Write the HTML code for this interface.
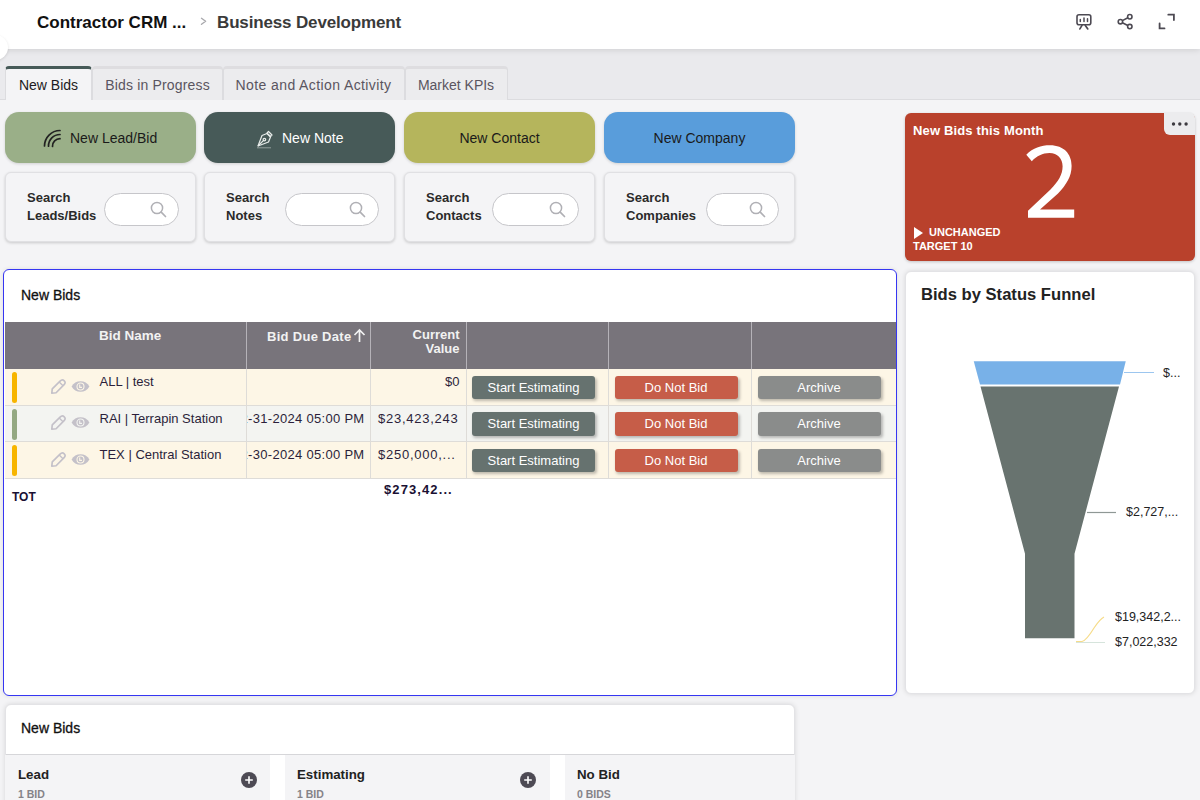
<!DOCTYPE html>
<html><head><meta charset="utf-8">
<style>
*{box-sizing:border-box;margin:0;padding:0}
html,body{width:1200px;height:800px;overflow:hidden}
body{background:#f4f4f6;font-family:"Liberation Sans",sans-serif;position:relative;color:#222}
.abs{position:absolute}
#hdr{left:0;top:0;width:1200px;height:49px;background:#fff;box-shadow:0 1px 6px rgba(0,0,0,.12)}
#bandbg{left:0;top:49px;width:1200px;height:51px;background:#eaeaed;border-bottom:1px solid #dcdcdf}
.ttl{font-weight:bold;font-size:17px;top:12.7px;white-space:nowrap}
.tab{top:65.5px;height:34px;background:#ececee;border:1px solid #dcdcdf;border-bottom:none;border-radius:4px 4px 0 0;font-size:14px;color:#5a5560;text-align:center;line-height:32px;border-top:3px solid #dedde0}
.tab.act{background:#f4f4f6;height:34.5px;color:#1d1b22;border-top:3px solid #465a58}
.btn{top:112px;height:51px;width:191px;border-radius:14px;font-size:14px;text-align:center;line-height:53px;box-shadow:0 1px 3px rgba(0,0,0,.15)}
.srch{top:171.5px;height:70.3px;width:190.5px;border-radius:6px;background:#f4f4f6;border:1px solid #e0e0e3;box-shadow:0 1px 3px rgba(0,0,0,.18);font-size:13px;font-weight:bold;color:#2a2a2a}
.srch .lbl{position:absolute;left:21px;top:16px;line-height:18.5px}
.mag{position:absolute;top:28.8px;left:144.3px}
.pill{position:absolute;top:20.5px;height:33px;border-radius:17px;background:#fff;border:1.2px solid #c6c6ca}

.th{position:absolute;top:321.5px;height:47.5px;background:#78747b;border-right:1px solid #b5b2b8;color:#f2f2f2;font-weight:bold;font-size:13px}
.row{position:absolute;left:5px;width:891px;height:36.7px;border-bottom:1px solid #dedcd8}
.td{position:absolute;top:0;height:100%;border-right:1px solid #dedcd8;overflow:hidden;font-size:13px;color:#2b1f3a;white-space:nowrap}
.td span{position:absolute;right:6px;top:5px}
.tb{position:absolute;top:6.5px;height:23.5px;width:123px;border-radius:3px;color:#fff;font-size:13px;text-align:center;line-height:23.5px;box-shadow:1.5px 2px 3px rgba(0,0,0,.25)}
.bar{position:absolute;left:7px;top:3px;width:5px;height:31px;border-radius:3px}
</style></head>
<body>
<div id="bandbg" class="abs"></div>
<div id="hdr" class="abs"></div>
<div class="abs" style="left:-17px;top:35px;width:25px;height:25px;border-radius:50%;background:#fff;box-shadow:0 1px 3px rgba(0,0,0,.12)"></div>
<div class="abs ttl" style="left:37px;color:#111">Contractor CRM ...</div>
<svg class="abs" style="left:199px;top:16px" width="10" height="10" viewBox="0 0 10 10"><path d="M2.5 2.3 L6.6 5.3 L2.5 8.3" fill="none" stroke="#a9a9ad" stroke-width="1.4" stroke-linecap="round" stroke-linejoin="round"/></svg>
<div class="abs ttl" style="left:217px;color:#3a3a3a;letter-spacing:-.15px">Business Development</div>


<svg class="abs" style="left:1074px;top:12px" width="20" height="19" viewBox="0 0 20 19"><rect x="3" y="2.8" width="13.8" height="9.9" rx="2" fill="none" stroke="#4d4a53" stroke-width="1.6"/><path d="M6.3 7.4v2.2M10 6v3.6M13.5 6.8v2.8" stroke="#4d4a53" stroke-width="1.5" stroke-linecap="round"/><path d="M8 13.4 L5.9 16.9 M11.3 13.4 L13.8 16.9" stroke="#4d4a53" stroke-width="1.7" stroke-linecap="round" fill="none"/></svg>
<svg class="abs" style="left:1116px;top:12px" width="20" height="19" viewBox="0 0 20 19"><circle cx="4.4" cy="9.7" r="2.2" fill="none" stroke="#4d4a53" stroke-width="1.6"/><circle cx="13.8" cy="4.75" r="2.2" fill="none" stroke="#4d4a53" stroke-width="1.6"/><circle cx="13.8" cy="14.55" r="2.2" fill="none" stroke="#4d4a53" stroke-width="1.6"/><path d="M6.4 8.6 L11.8 5.8 M6.4 10.8 L11.8 13.5" stroke="#4d4a53" stroke-width="1.6"/></svg>
<svg class="abs" style="left:1156px;top:12px" width="20" height="19" viewBox="0 0 20 19"><path d="M12.3 2.7 H17.9 V8 M3.6 11.5 V16.4 H8.5" fill="none" stroke="#4d4a53" stroke-width="1.8" stroke-linecap="round"/></svg>

<div class="abs tab act" style="left:5px;width:87px">New Bids</div>
<div class="abs tab" style="left:92px;width:131px;letter-spacing:.17px">Bids in Progress</div>
<div class="abs tab" style="left:222.5px;width:182px;letter-spacing:.4px">Note and Action Activity</div>
<div class="abs tab" style="left:404.5px;width:103px">Market KPIs</div>

<div class="abs btn" style="left:5px;width:190.5px;background:#9aaf88;color:#1a1a1a"><span style="position:absolute;left:65px;top:0">New Lead/Bid</span></div>
<svg class="abs" style="left:42px;top:128px" width="20" height="20" viewBox="0 0 20 20"><g fill="none" stroke="#222" stroke-width="1.7" stroke-linecap="round"><path d="M2.5 18 A15.5 15.5 0 0 1 18 2.5"/><path d="M6.5 18.2 A11.5 11.5 0 0 1 18 6.5"/><path d="M10.5 18.4 A7.5 7.5 0 0 1 18 10.7"/></g></svg>
<div class="abs btn" style="left:204px;width:191px;background:#475a58;color:#fff"><span style="position:absolute;left:78px;top:0">New Note</span></div>
<svg class="abs" style="left:256px;top:130px" width="18" height="19" viewBox="0 0 18 19"><g fill="none" stroke="#e8ecea" stroke-width="1.2" stroke-linejoin="round"><path d="M12.5 1.5 L16 5 L14.5 6.5 L11 3Z"/><path d="M11 3.5 L6 5.5 L2 16 L12.5 12 L14.5 7 Z"/><path d="M2 16 L7.3 10.7"/><circle cx="8.4" cy="9.6" r="1.3"/></g><path d="M1 17.8 H15" stroke="#cfd6d4" stroke-width="1" opacity=".55"/></svg>
<div class="abs btn" style="left:404px;width:191px;background:#b5b55c;color:#1a1a1a">New Contact</div>
<div class="abs btn" style="left:604px;width:191px;background:#599ddb;color:#1a1a1a">New Company</div>

<div class="abs srch" style="left:5px"><div class="lbl">Search<br>Leads/Bids</div><div class="pill" style="left:98.2px;width:74.5px"></div><svg class="mag" width="18" height="18" viewBox="0 0 18 18"><circle cx="7" cy="7" r="5.6" fill="none" stroke="#b0b0b5" stroke-width="1.5"/><path d="M11.2 11.2 L15.5 15.5" stroke="#b0b0b5" stroke-width="1.7" stroke-linecap="round"/></svg></div>
<div class="abs srch" style="left:204px"><div class="lbl">Search<br>Notes</div><div class="pill" style="left:79.5px;width:94px"></div><svg class="mag" width="18" height="18" viewBox="0 0 18 18"><circle cx="7" cy="7" r="5.6" fill="none" stroke="#b0b0b5" stroke-width="1.5"/><path d="M11.2 11.2 L15.5 15.5" stroke="#b0b0b5" stroke-width="1.7" stroke-linecap="round"/></svg></div>
<div class="abs srch" style="left:404px"><div class="lbl">Search<br>Contacts</div><div class="pill" style="left:86.5px;width:87px"></div><svg class="mag" width="18" height="18" viewBox="0 0 18 18"><circle cx="7" cy="7" r="5.6" fill="none" stroke="#b0b0b5" stroke-width="1.5"/><path d="M11.2 11.2 L15.5 15.5" stroke="#b0b0b5" stroke-width="1.7" stroke-linecap="round"/></svg></div>
<div class="abs srch" style="left:604px"><div class="lbl">Search<br>Companies</div><div class="pill" style="left:100.5px;width:73px"></div><svg class="mag" width="18" height="18" viewBox="0 0 18 18"><circle cx="7" cy="7" r="5.6" fill="none" stroke="#b0b0b5" stroke-width="1.5"/><path d="M11.2 11.2 L15.5 15.5" stroke="#b0b0b5" stroke-width="1.7" stroke-linecap="round"/></svg></div>

<!-- KPI card -->
<div class="abs" style="left:905px;top:113px;width:290px;height:148px;background:#b9412c;border-radius:6px;box-shadow:0 1px 3px rgba(0,0,0,.2)"></div>
<div class="abs" style="left:1164px;top:112px;width:31px;height:23px;background:#ececee;border-radius:0 6px 0 6px"></div>
<svg class="abs" style="left:1164px;top:112px" width="31" height="24" viewBox="0 0 31 24"><circle cx="9.5" cy="12" r="1.7" fill="#3c3a40"/><circle cx="15.8" cy="12" r="1.7" fill="#3c3a40"/><circle cx="22.1" cy="12" r="1.7" fill="#3c3a40"/></svg>
<div class="abs" style="left:913px;top:123px;font-size:13px;font-weight:bold;color:#fff;letter-spacing:.15px">New Bids this Month</div>
<svg class="abs" style="left:1010px;top:135px" width="80" height="90" viewBox="1010 135 80 90"><path d="M1026.3 154.8 C1033 147.8 1041 145.3 1050 145.3 C1064 145.3 1071.6 154 1071.6 166 C1071.6 176.5 1066.5 184.5 1058 193.5 L1040 209.6 L1074.2 209.6 L1074.2 217.7 L1028 217.7 L1028 210.8 L1050.5 189.5 C1058.5 181.5 1062.6 174.5 1062.6 166.3 C1062.6 158.5 1057.5 153 1049.5 153 C1042.5 153 1036.8 156 1031.8 161.2 Z" fill="#fff"/></svg>
<div class="abs" style="left:913.5px;top:226.8px;width:0;height:0;border-left:9.5px solid #fff;border-top:6.1px solid transparent;border-bottom:6.1px solid transparent"></div><div class="abs" style="left:929px;top:226px;font-size:11px;font-weight:bold;color:#fff">UNCHANGED</div>
<div class="abs" style="left:913px;top:240px;font-size:11px;font-weight:bold;color:#fff">TARGET 10</div>

<!-- table panel -->
<div class="abs" style="left:3px;top:269px;width:894px;height:427px;background:#fff;border:1.8px solid #3636f2;border-radius:6px;box-shadow:0 0 4px rgba(0,0,0,.1)"></div>
<div class="abs" style="left:21px;top:287px;font-size:14px;color:#111;-webkit-text-stroke:.3px #111">New Bids</div>


<!-- table header -->
<div class="th" style="left:5px;width:242px"><div class="abs" style="left:94px;top:6px;font-size:13.5px">Bid Name</div></div>
<div class="th" style="left:246.5px;width:124px"><div class="abs" style="right:4px;top:6px;letter-spacing:.3px">Bid Due Date<svg width="13" height="15" viewBox="0 0 13 15" style="vertical-align:-2px;margin-left:1px"><path d="M6.5 14V2M1.5 7L6.5 2L11.5 7" fill="none" stroke="#f2f2f2" stroke-width="1.7"/></svg></div></div>
<div class="th" style="left:370.5px;width:96px;text-align:right"><div class="abs" style="right:6px;top:6px;line-height:14.5px">Current<br>Value</div></div>
<div class="th" style="left:466.5px;width:142px"></div>
<div class="th" style="left:608.5px;width:143px"></div>
<div class="th" style="left:751.5px;width:144px;border-right:none"></div>
<div class="row" style="top:369px;background:#fdf6e6">
 <div class="bar" style="background:#f7b500"></div>
 <svg class="abs" style="left:44.5px;top:9.5px" width="16" height="16" viewBox="0 0 16 16"><g transform="translate(8 8) rotate(45)" fill="none" stroke="#c4c1c9" stroke-linejoin="round"><path d="M-2.7 -5.6 Q-2.7 -8.8 0 -8.8 Q2.7 -8.8 2.7 -5.6 V5.4 L0 8.8 L-2.7 5.4Z" stroke-width="1.7"/><path d="M-2.7 -4.4 H2.7" stroke-width="1.3"/></g></svg>
 <svg class="abs" style="left:65.5px;top:10.8px" width="19" height="13" viewBox="0 0 19 13"><path d="M0.6 6.5 C4 -0.6, 15 -0.6, 18.4 6.5 C15 13.6, 4 13.6, 0.6 6.5Z" fill="#c4c1c9"/><circle cx="9.5" cy="6.5" r="3.5" fill="none" stroke="#fdf6e6" stroke-width="1.1"/><path d="M8.7 4.4 V7.4 H11" fill="none" stroke="#fdf6e6" stroke-width="1.1"/></svg>
 <div class="abs" style="left:94.5px;top:5px;font-size:13px;color:#2b1f3a">ALL | test</div>
 <div class="td" style="left:240.5px;width:125px;border-left:1px solid #dedcd8"><span></span></div>
 <div class="td" style="left:365.5px;width:96px"><span>$0</span></div>
 <div class="td" style="left:461.5px;width:142px"><div class="tb" style="left:5.5px;background:#66726f">Start Estimating</div></div>
 <div class="td" style="left:603.5px;width:143px"><div class="tb" style="left:6px;background:#c65d48">Do Not Bid</div></div>
 <div class="td" style="left:746.5px;width:144px;border-right:none"><div class="tb" style="left:6px;background:#8a8c8b">Archive</div></div>
</div>
<div class="row" style="top:405.5px;background:#f3f4f1">
 <div class="bar" style="background:#94a882"></div>
 <svg class="abs" style="left:44.5px;top:9.5px" width="16" height="16" viewBox="0 0 16 16"><g transform="translate(8 8) rotate(45)" fill="none" stroke="#c4c1c9" stroke-linejoin="round"><path d="M-2.7 -5.6 Q-2.7 -8.8 0 -8.8 Q2.7 -8.8 2.7 -5.6 V5.4 L0 8.8 L-2.7 5.4Z" stroke-width="1.7"/><path d="M-2.7 -4.4 H2.7" stroke-width="1.3"/></g></svg>
 <svg class="abs" style="left:65.5px;top:10.8px" width="19" height="13" viewBox="0 0 19 13"><path d="M0.6 6.5 C4 -0.6, 15 -0.6, 18.4 6.5 C15 13.6, 4 13.6, 0.6 6.5Z" fill="#c4c1c9"/><circle cx="9.5" cy="6.5" r="3.5" fill="none" stroke="#f3f4f1" stroke-width="1.1"/><path d="M8.7 4.4 V7.4 H11" fill="none" stroke="#f3f4f1" stroke-width="1.1"/></svg>
 <div class="abs" style="left:94.5px;top:5px;font-size:13px;color:#2b1f3a">RAI | Terrapin Station</div>
 <div class="td" style="left:240.5px;width:125px;border-left:1px solid #dedcd8"><span style="letter-spacing:.3px;right:5px">12-31-2024 05:00 PM</span></div>
 <div class="td" style="left:365.5px;width:96px"><span style="letter-spacing:.75px;right:auto;left:7.5px">$23,423,243</span></div>
 <div class="td" style="left:461.5px;width:142px"><div class="tb" style="left:5.5px;background:#66726f">Start Estimating</div></div>
 <div class="td" style="left:603.5px;width:143px"><div class="tb" style="left:6px;background:#c65d48">Do Not Bid</div></div>
 <div class="td" style="left:746.5px;width:144px;border-right:none"><div class="tb" style="left:6px;background:#8a8c8b">Archive</div></div>
</div>
<div class="row" style="top:442.3px;background:#fdf6e6">
 <div class="bar" style="background:#f7b500"></div>
 <svg class="abs" style="left:44.5px;top:9.5px" width="16" height="16" viewBox="0 0 16 16"><g transform="translate(8 8) rotate(45)" fill="none" stroke="#c4c1c9" stroke-linejoin="round"><path d="M-2.7 -5.6 Q-2.7 -8.8 0 -8.8 Q2.7 -8.8 2.7 -5.6 V5.4 L0 8.8 L-2.7 5.4Z" stroke-width="1.7"/><path d="M-2.7 -4.4 H2.7" stroke-width="1.3"/></g></svg>
 <svg class="abs" style="left:65.5px;top:10.8px" width="19" height="13" viewBox="0 0 19 13"><path d="M0.6 6.5 C4 -0.6, 15 -0.6, 18.4 6.5 C15 13.6, 4 13.6, 0.6 6.5Z" fill="#c4c1c9"/><circle cx="9.5" cy="6.5" r="3.5" fill="none" stroke="#fdf6e6" stroke-width="1.1"/><path d="M8.7 4.4 V7.4 H11" fill="none" stroke="#fdf6e6" stroke-width="1.1"/></svg>
 <div class="abs" style="left:94.5px;top:5px;font-size:13px;color:#2b1f3a">TEX | Central Station</div>
 <div class="td" style="left:240.5px;width:125px;border-left:1px solid #dedcd8"><span style="letter-spacing:.3px;right:5px">12-30-2024 05:00 PM</span></div>
 <div class="td" style="left:365.5px;width:96px"><span style="letter-spacing:.75px;right:auto;left:7.5px">$250,000,...</span></div>
 <div class="td" style="left:461.5px;width:142px"><div class="tb" style="left:5.5px;background:#66726f">Start Estimating</div></div>
 <div class="td" style="left:603.5px;width:143px"><div class="tb" style="left:6px;background:#c65d48">Do Not Bid</div></div>
 <div class="td" style="left:746.5px;width:144px;border-right:none"><div class="tb" style="left:6px;background:#8a8c8b">Archive</div></div>
</div>
<div class="abs" style="left:12px;top:490px;font-size:12px;font-weight:bold;color:#1a1033">TOT</div>
<div class="abs" style="left:384px;top:482px;font-size:13px;font-weight:bold;color:#1a1033;letter-spacing:1.1px">$273,42...</div>
<!-- funnel panel -->
<div class="abs" style="left:905px;top:271px;width:290px;height:423px;background:#fff;border-radius:6px;border:1px solid #e3e3e6;box-shadow:0 0 5px rgba(0,0,0,.12)"></div>
<div class="abs" style="left:921px;top:285px;font-size:16.6px;font-weight:bold;color:#222">Bids by Status Funnel</div>


<svg class="abs" style="left:905px;top:271px" width="290" height="423" viewBox="905 271 290 423">
 <polygon points="973.75,361.25 1125.75,361.25 1120,384.5 980,384.5" fill="#78b1e8"/>
 <polygon points="980.5,386.5 1119,386.5 1074.5,553.75 1074.5,638.25 1025,638.25 1025,553.75" fill="#68736f"/>
 <line x1="1124" y1="372.5" x2="1154" y2="372.5" stroke="#9cc6ef" stroke-width="1"/>
 <line x1="1087" y1="512.5" x2="1116" y2="512.5" stroke="#8f9895" stroke-width="1.2"/>
 <path d="M1076 641.5 L1082 641.5 Q1086 641 1094 628 Q1100 619 1104 617" fill="none" stroke="#f6dc8a" stroke-width="1.2"/>
 <line x1="1076" y1="642.5" x2="1105" y2="642.5" stroke="#d6e4dc" stroke-width="1"/>
</svg>
<div class="abs" style="left:1163px;top:366px;font-size:12.5px;color:#222">$...</div>
<div class="abs" style="left:1126px;top:505px;font-size:12.5px;color:#222">$2,727,...</div>
<div class="abs" style="left:1115px;top:610px;font-size:12.5px;color:#222">$19,342,2...</div>
<div class="abs" style="left:1115px;top:635px;font-size:12.5px;color:#222">$7,022,332</div>

<!-- bottom panel -->
<div class="abs" style="left:5px;top:703.5px;width:790px;height:120px;background:#fff;border-radius:6px;border:1px solid #e3e3e6;box-shadow:0 0 5px rgba(0,0,0,.12)"></div>
<div class="abs" style="left:21px;top:720px;font-size:14px;color:#111;-webkit-text-stroke:.3px #111">New Bids</div>

<div class="abs" style="left:6px;top:753.5px;width:788px;height:1.2px;background:#d6d6d9"></div>
<div class="abs" style="left:5px;top:755px;width:265px;height:45px;background:#f4f4f6"></div>
<div class="abs" style="left:285px;top:755px;width:265px;height:45px;background:#f4f4f6"></div>
<div class="abs" style="left:565px;top:755px;width:230px;height:45px;background:#f4f4f6"></div>
<div class="abs" style="left:18px;top:767px;font-size:13.3px;font-weight:bold;color:#222">Lead</div>
<div class="abs" style="left:18px;top:788px;font-size:10.5px;font-weight:bold;color:#858388">1 BID</div>
<div class="abs" style="left:297px;top:767px;font-size:13.3px;font-weight:bold;color:#222">Estimating</div>
<div class="abs" style="left:297px;top:788px;font-size:10.5px;font-weight:bold;color:#858388">1 BID</div>
<div class="abs" style="left:577px;top:767px;font-size:13.3px;font-weight:bold;color:#222">No Bid</div>
<div class="abs" style="left:577px;top:788px;font-size:10.5px;font-weight:bold;color:#858388">0 BIDS</div>
<svg class="abs" style="left:241px;top:772px" width="16" height="16" viewBox="0 0 16 16"><circle cx="8" cy="8" r="8" fill="#4d4a54"/><path d="M8 4.2v7.6M4.2 8h7.6" stroke="#fff" stroke-width="1.6"/></svg>
<svg class="abs" style="left:520px;top:772px" width="16" height="16" viewBox="0 0 16 16"><circle cx="8" cy="8" r="8" fill="#4d4a54"/><path d="M8 4.2v7.6M4.2 8h7.6" stroke="#fff" stroke-width="1.6"/></svg>
</body></html>
